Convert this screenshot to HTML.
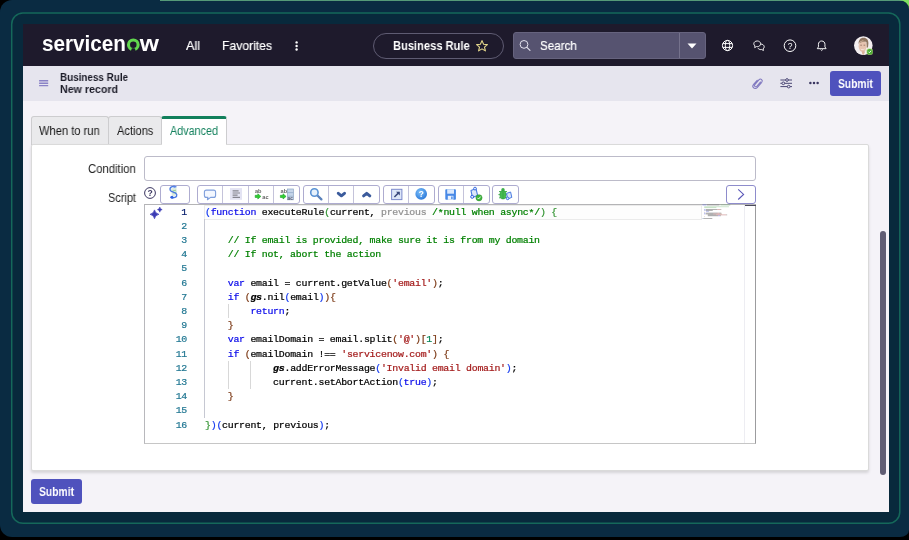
<!DOCTYPE html>
<html>
<head>
<meta charset="utf-8">
<title>Business Rule</title>
<style>
*{box-sizing:border-box;margin:0;padding:0}
html,body{width:909px;height:540px;overflow:hidden;background:#000}
body{font-family:"Liberation Sans",sans-serif;position:relative;color:#1a1a1a}
.abs{position:absolute}
.code,.t,svg{will-change:transform}
.t{position:absolute;white-space:nowrap;transform-origin:0 50%}
#frame{left:0;top:0;width:909px;height:537px;background:#0a2b42;border-radius:12px 9px 9px 12px / 12px 9px 7px 12px}
#topline{left:160px;top:0;width:749px;height:1.4px;background:#559a78}
#gline{left:11px;top:12px;width:889px;height:512px;border:1px solid #146a58;border-radius:11px}
#screen{left:23px;top:24px;width:866px;height:488px;background:#f5f3f8;overflow:hidden}
#nav{left:0;top:0;width:866px;height:42px;background:#1e1a2c}
#sub{left:0;top:42px;width:866px;height:35px;background:#e6e5ee}
.navtxt{color:#fff;font-size:13px;line-height:16px;top:14px;-webkit-text-stroke:0.2px}
.pill{left:350px;top:8.5px;width:131px;height:26px;border:1px solid #5e5b72;border-radius:13px}
.search{left:490px;top:8px;width:193px;height:27px;background:#565370;border-radius:3px;border:1px solid #66637e}
.btn{background:#4f52bd;color:#fff;font-weight:bold;font-size:12px;border-radius:3px}
.tab{top:92px;height:28.5px;background:#eaeaec;border:1px solid #cdcdcf;border-bottom:none;border-radius:3px 3px 0 0}
.tabt{font-size:12px;line-height:14px;top:100px;color:#161616}
#panel{left:8px;top:120px;width:838px;height:327px;background:#fff;border:1px solid #dadada;border-radius:2px;box-shadow:0 2px 3px rgba(0,0,0,.13)}
.lbl{font-size:12px;line-height:14px;color:#222}
#cond{left:121px;top:131.5px;width:612px;height:25.5px;border:1px solid #bcbbc9;border-radius:3px;background:#fff}
#editor{left:121px;top:180px;width:612px;height:240px;border:1px solid #c6c6c6;border-top-color:#b4b4b6;border-right-color:#9c9c9e;border-left-color:#b8b8bc;background:#fff;overflow:hidden}
.code{font-family:"Liberation Mono",monospace;font-size:9.9px;letter-spacing:-0.252px;line-height:14.2px;white-space:pre;color:#000;-webkit-text-stroke:0.22px}
.k{color:#0c0cea}.c{color:#008000}.s{color:#a41c1c}.n{color:#098658}
.b1{color:#1238f0}.b2{color:#319331}.b3{color:#7b3814}.g{color:#909090}
.gs{font-weight:bold;font-style:italic}
.tb{top:161px;height:19px;border:1px solid #aeacd0;border-radius:3px;background:#fff}
.dv{top:0;width:1px;height:17px;background:#c4c3da}
.ig{width:1px;background:#d8d8d8}
</style>
</head>
<body>
<div id="frame" class="abs"></div>
<div id="topline" class="abs"></div>
<svg class="abs" style="right:0;top:0" width="10" height="9"><path d="M0 0H10V9A10 9 0 0 0 0 0Z" fill="#7ee060"/></svg>
<svg class="abs" style="left:0;top:0" width="909" height="540"><rect x="11.7" y="12.9" width="888.1" height="510.4" rx="11.3" fill="#08293c" stroke="#15685a" stroke-width="1.5"/></svg>
<div id="screen" class="abs">
  <div id="nav" class="abs">
    <!-- LOGO -->
    <svg class="abs" style="left:16px;top:6px" width="126" height="28" viewBox="0 0 126 28">
      <text x="3" y="20.9" font-family="Liberation Sans" font-weight="bold" font-size="22.5" fill="#fff" textLength="84" lengthAdjust="spacingAndGlyphs">servicen</text>
      <circle cx="94.3" cy="14.85" r="4.8" fill="none" stroke="#62d84e" stroke-width="3.1"/>
      <path d="M91.6 21.8 L92.9 18.2 H95.7 L97 21.8Z" fill="#1e1a2c"/>
      <text x="100.8" y="20.9" font-family="Liberation Sans" font-weight="bold" font-size="22.5" fill="#fff" textLength="19.2" lengthAdjust="spacingAndGlyphs">w</text>
    </svg>
    <div class="t navtxt" id="t_all" style="transform:scaleX(0.969);left:163px">All</div>
    <div class="t navtxt" id="t_fav" style="transform:scaleX(0.935);left:199px">Favorites</div>
    <svg class="abs" style="left:270px;top:16px" width="8" height="12" viewBox="0 0 8 12"><circle cx="3.6" cy="2.4" r="1.2" fill="#fff"/><circle cx="3.6" cy="6" r="1.2" fill="#fff"/><circle cx="3.6" cy="9.5" r="1.2" fill="#fff"/></svg>
    <div class="abs pill"></div>
    <div class="t" id="t_pill" style="transform:scaleX(0.89);left:370px;top:13.5px;color:#fff;font-weight:bold;font-size:12.5px;line-height:16px">Business Rule</div>
    <svg class="abs" style="left:452px;top:15px" width="14" height="14" viewBox="0 0 14 14"><path d="M7 1.6 L8.6 5.2 L12.4 5.6 L9.5 8.1 L10.4 11.9 L7 9.9 L3.6 11.9 L4.5 8.1 L1.6 5.6 L5.4 5.2Z" fill="none" stroke="#e6d88c" stroke-width="1.1" stroke-linejoin="round"/></svg>
    <div class="abs search"></div>
    <svg class="abs" style="left:495px;top:14px" width="14" height="14" viewBox="0 0 14 14"><circle cx="6" cy="6.4" r="3.9" fill="none" stroke="#e4e2ee" stroke-width="1"/><path d="M8.9 9.3 L12 12.4" stroke="#e4e2ee" stroke-width="1.1" stroke-linecap="round"/></svg>
    <div class="t" id="t_search" style="transform:scaleX(0.891);left:517px;top:14px;-webkit-text-stroke:0.2px;color:#fff;font-size:13px;line-height:16px">Search</div>
    <div class="abs" style="left:656px;top:9px;width:1px;height:25px;background:#75728c"></div>
    <svg class="abs" style="left:664.3px;top:18.7px" width="10" height="6"><path d="M0.5 0.5H9.5L5 5.5Z" fill="#fff"/></svg>
    <!-- globe -->
    <svg class="abs" style="left:697px;top:14.4px" width="15" height="15" viewBox="0 0 15 15" fill="none" stroke="#fff" stroke-width="1"><circle cx="7.5" cy="7.5" r="5.1"/><ellipse cx="7.5" cy="7.5" rx="2.2" ry="5.1"/><path d="M2.8 5.6H12.2M2.8 9.4H12.2"/></svg>
    <!-- chat -->
    <svg class="abs" style="left:729.2px;top:14.9px" width="14.4" height="13.5" viewBox="0 0 16 15" fill="none" stroke="#fff" stroke-width="1" stroke-linejoin="round"><path d="M5.8 2.2C3.6 2.2 2 3.6 2 5.3C2 6.3 2.5 7.1 3.3 7.7L3 9.6L5 8.4C5.3 8.4 5.5 8.5 5.8 8.5C8 8.5 9.6 7.1 9.6 5.3C9.6 3.6 8 2.2 5.8 2.2Z"/><path d="M9.9 5.6C11.8 5.7 13.6 6.9 13.6 8.7C13.6 9.6 13.1 10.4 12.4 11L12.7 12.8L10.8 11.7C10.5 11.8 10.2 11.8 9.9 11.8C8.4 11.8 7 11.1 6.5 9.9" /></svg>
    <!-- help -->
    <svg class="abs" style="left:759px;top:14px" width="16" height="16" viewBox="0 0 16 16"><circle cx="8" cy="7.7" r="5.8" fill="none" stroke="#fff" stroke-width="1"/><text x="8" y="10.6" text-anchor="middle" font-family="Liberation Sans" font-size="8.5" fill="#fff">?</text></svg>
    <!-- bell -->
    <svg class="abs" style="left:792.3px;top:15px" width="13.4" height="14.6" preserveAspectRatio="none" viewBox="0 0 14 16" fill="none" stroke="#fff" stroke-width="1" stroke-linejoin="round"><path d="M7 2.2C4.9 2.2 3.6 3.8 3.6 5.8V8.6L2.4 10.6H11.6L10.4 8.6V5.8C10.4 3.8 9.1 2.2 7 2.2Z"/><path d="M5.8 11.4 L7 12.6 L8.2 11.4" /></svg>
    <!-- avatar -->
    <svg class="abs" style="left:830px;top:11px" width="22" height="22" viewBox="0 0 22 22">
      <defs><clipPath id="av"><circle cx="10.3" cy="10.6" r="9.3"/></clipPath></defs>
      <circle cx="10.3" cy="10.6" r="9.3" fill="#f3eef0"/>
      <g clip-path="url(#av)">
        <path d="M5.6 9 C5.4 4.6 8 2.6 10.6 2.8 C13.8 2.8 15.6 5 15.4 8.6 L15 12.4 L13.6 12.6 L13.4 7 C11.5 6 8.5 6.2 6.6 7.2Z" fill="#8f7661"/>
        <ellipse cx="9.6" cy="11.2" rx="4" ry="5.6" fill="#e6c3b0"/>
        <path d="M6.2 8.2 C7.5 6 11.8 5.6 13.4 7.4 C11.5 6.8 8.2 7 6.2 8.2Z" fill="#9b826c"/>
        <path d="M7.3 10.2H8.9M10.6 10.2H12.2" stroke="#8a6a5a" stroke-width="0.8"/>
        <path d="M7.6 13.4C8.8 14.8 11 14.8 12 13.2C11.4 15.4 8.4 15.6 7.6 13.4Z" fill="#fbf6f4"/>
        <path d="M8.6 16.2 L9.6 21 L12 21 L11.6 16Z" fill="#dcb29c"/>
        <path d="M1 22C2 18.6 5 17.6 8.4 17.2L10 20.4L12.4 17.2C15 17.4 18 18.4 19.6 22Z" fill="#f6f2f2"/>
      </g>
      <rect x="13.5" y="13.5" width="6.4" height="6.4" rx="1.8" fill="#a8e070" opacity="0.75"/>
      <circle cx="16.7" cy="16.7" r="2.6" fill="#4dae33"/>
      <path d="M15.4 16.7 L16.4 17.7 L18.1 15.8" fill="none" stroke="#fff" stroke-width="0.9"/>
    </svg>
  </div>
  <div id="sub" class="abs">
    <svg class="abs" style="left:16px;top:14px" width="10" height="7" viewBox="0 0 10 7"><path d="M0.1 0.8H9.2M0.1 3.2H9.2M0.1 5.6H9.2" stroke="#8a82c6" stroke-width="1.4"/></svg>
    <div class="t" id="t_h1" style="transform:scaleX(0.897);left:36.5px;top:5px;font-size:11px;font-weight:bold;line-height:13px;color:#1c1c28">Business Rule</div>
    <div class="t" id="t_h2" style="transform:scaleX(0.968);left:36.5px;top:17px;font-size:11px;font-weight:bold;line-height:13px;color:#1c1c28">New record</div>
    <!-- paperclip -->
    <svg class="abs" style="left:728px;top:10.5px" width="13" height="13.8" viewBox="0 0 16 17" fill="none" stroke="#8179c0" stroke-width="1.35" stroke-linecap="round"><path d="M11.6 6.2 L7.2 11.4 C6.5 12.2 5.4 12.2 4.8 11.6 C4.1 11 4.1 10 4.7 9.3 L9.7 3.5 C10.7 2.4 12.2 2.4 13.1 3.2 C14 4 14.1 5.4 13.2 6.5 L7.6 13 C6.3 14.5 4.4 14.6 3.2 13.5 C2 12.4 1.9 10.6 3.2 9.1 L7.6 4"/></svg>
    <!-- sliders -->
    <svg class="abs" style="left:756px;top:11px" width="15" height="12" viewBox="0 0 15 12" fill="none" stroke="#4a4674" stroke-width="1"><path d="M1.4 3H13M1.4 6.3H13M1.4 9.6H13"/><circle cx="8" cy="3" r="1.35" fill="#e6e5ee"/><circle cx="4.3" cy="6.3" r="1.35" fill="#e6e5ee"/><circle cx="9.7" cy="9.6" r="1.35" fill="#e6e5ee"/></svg>
    <!-- ellipsis -->
    <svg class="abs" style="left:785.3px;top:15px" width="12" height="4"><circle cx="2.35" cy="2" r="1.25" fill="#3a3660"/><circle cx="6" cy="2" r="1.25" fill="#3a3660"/><circle cx="9.65" cy="2" r="1.25" fill="#3a3660"/></svg>
    <div class="abs btn" style="left:807.3px;top:5.3px;width:51px;height:24.5px"></div>
    <div class="t" id="t_sub1" style="transform:scaleX(0.822);left:815px;top:9.5px;color:#fff;font-weight:bold;font-size:12.5px;line-height:16px">Submit</div>
  </div>
  <!-- tabs -->
  <div class="abs tab" style="left:8.4px;width:77.5px"></div>
  <div class="abs tab" style="left:85.4px;width:53.5px"></div>
  <div class="abs tab" style="left:138.3px;width:65.7px;background:#fff;border-top:3px solid #12805c;height:29px"></div>
  <div class="t tabt" id="t_tab1" style="transform:scaleX(0.928);left:16px">When to run</div>
  <div class="t tabt" id="t_tab2" style="transform:scaleX(0.925);left:93.9px">Actions</div>
  <div class="t tabt" id="t_tab3" style="transform:scaleX(0.899);left:147px;color:#12805c">Advanced</div>
  <div id="panel" class="abs"></div>
  <div class="abs" style="left:139.3px;top:119px;width:63.7px;height:3px;background:#fff"></div>
  <div class="t lbl" id="t_cond" style="transform:scaleX(0.943);left:64.9px;top:137.5px">Condition</div>
  <div id="cond" class="abs"></div>
  <div class="t lbl" id="t_script" style="transform:scaleX(0.912);left:84.7px;top:167px">Script</div>
  <!-- help icon -->
  <svg class="abs" style="left:120px;top:162px" width="14" height="14" viewBox="0 0 14 14"><circle cx="7" cy="7" r="5.4" fill="#fff" stroke="#3a3560" stroke-width="1"/><text x="7" y="10" text-anchor="middle" font-family="Liberation Sans" font-size="8.6" font-weight="bold" fill="#3a3560">?</text></svg>
  <!-- toolbar -->
  <div class="abs tb" style="left:137px;width:30px" id="tb1"></div>
  <div class="abs tb" style="left:174px;width:103px" id="tb2"><div class="abs dv" style="left:24px"></div><div class="abs dv" style="left:50px"></div><div class="abs dv" style="left:75px"></div></div>
  <div class="abs tb" style="left:280px;width:77px" id="tb3"><div class="abs dv" style="left:24px"></div><div class="abs dv" style="left:49px"></div></div>
  <div class="abs tb" style="left:360px;width:52px" id="tb4"><div class="abs dv" style="left:24px"></div></div>
  <div class="abs tb" style="left:415px;width:52px" id="tb5"><div class="abs dv" style="left:24px"></div></div>
  <div class="abs tb" style="left:469px;width:27px" id="tb6"></div>
  <div class="abs tb" style="left:703px;width:30px;border-color:#8e8ccc" id="tb7"></div>
  <svg class="abs" style="left:713px;top:164px" width="10" height="13" viewBox="0 0 10 13"><path d="M2.2 1.3 L7.6 6.4 L2.2 11.5" fill="none" stroke="#5a57b8" stroke-width="1.1"/></svg>
<!-- toolbar icons (absolute coords) -->
  <svg class="abs" style="left:0;top:0" width="866" height="488" viewBox="23 24 866 488" font-family="Liberation Sans">
    <defs><radialGradient id="bs" cx="0.4" cy="0.35" r="0.75"><stop offset="0" stop-color="#7cc0fa"/><stop offset="1" stop-color="#2472d6"/></radialGradient></defs>
    <!-- 1 script scroll -->
    <g>
      <path d="M171 188.4 L176.4 187.4 L177.2 195 L172 196.4Z" fill="#dcebe0"/>
      <path d="M172.4 191 L176 190.2 M172.8 193 L176.2 192.2" stroke="#8fcf8f" stroke-width="0.9"/>
      <path d="M176 186.8 C172.6 185.4 169.2 187.4 170.2 190.2 C171 192.4 176.2 192 176.8 194.6 C177.3 197 173.6 198.6 170.8 197.2" fill="none" stroke="#4a7be2" stroke-width="1.3" stroke-linecap="round"/>
      <circle cx="174.2" cy="186.6" r="1.2" fill="#5a86e6"/>
      <circle cx="172" cy="197.2" r="1.5" fill="#2f62e0"/>
    </g>
    <!-- 2 comment bubble -->
    <path d="M206.4 190.1 H213.6 A2 2 0 0 1 215.6 192.1 V195.4 A2 2 0 0 1 213.6 197.4 H210.6 L207.4 199.7 L207.9 197.4 H206.4 A2 2 0 0 1 204.4 195.4 V192.1 A2 2 0 0 1 206.4 190.1Z" fill="#f3f7ff" stroke="#7f9fdc" stroke-width="1.1" stroke-linejoin="round"/>
    <!-- 3 format lines -->
    <rect x="230" y="188.1" width="12" height="11.7" fill="#e3e3f3"/>
    <path d="M232.6 190.8H238.6M232.6 193H240M232.6 195.2H237.6M232.6 197.4H240" stroke="#858590" stroke-width="1.2"/>
    <!-- 4 replace -->
    <text x="255" y="193.2" font-size="5.6" fill="#666" font-weight="bold">ab</text>
    <path d="M255.2 195.3H257.8V193.8L260.9 196.4L257.8 199V197.5H255.2Z" fill="#2fd02f" stroke="#1f9f2a" stroke-width="0.6" stroke-linejoin="round"/>
    <text x="262.3" y="199" font-size="5.6" fill="#666" font-weight="bold">ac</text>
    <!-- 5 replace all -->
    <text x="280.6" y="193.2" font-size="5.6" fill="#666" font-weight="bold">ab</text>
    <path d="M280.4 195.3H283V193.8L286.1 196.4L283 199V197.5H280.4Z" fill="#2fd02f" stroke="#1f9f2a" stroke-width="0.6" stroke-linejoin="round"/>
    <rect x="287.4" y="189" width="6" height="10.8" fill="#c6d6ea" stroke="#8ea6c6" stroke-width="0.7"/>
    <path d="M287.4 192.6H293.4M287.4 196.2H293.4" stroke="#8ea6c6" stroke-width="0.7"/>
    <text x="287.6" y="199.6" font-size="4.6" fill="#556" font-weight="bold">ac</text>
    <!-- 6 search -->
    <path d="M317.2 195.3 L321.4 199.4" stroke="#5a82bc" stroke-width="2.3" stroke-linecap="round"/>
    <circle cx="314.4" cy="192.5" r="3.7" fill="#e6f1fc" stroke="#5a92d4" stroke-width="1.6"/>
    <!-- 7 8 chevrons -->
    <path d="M338.3 193.3 L341.4 195.8 L344.5 193.3" fill="none" stroke="#3b5b9c" stroke-width="3" stroke-linecap="round" stroke-linejoin="round"/>
    <path d="M363.6 195.8 L366.7 193.3 L369.8 195.8" fill="none" stroke="#3b5b9c" stroke-width="3" stroke-linecap="round" stroke-linejoin="round"/>
    <!-- 9 popout -->
    <rect x="391.6" y="189.3" width="10.3" height="10.3" fill="#dde6f8" stroke="#7c8acc" stroke-width="1"/>
    <path d="M394.4 197 L399 192.4" stroke="#39487c" stroke-width="1.5"/>
    <path d="M396 191.7 H399.8 V195.5Z" fill="#39487c"/>
    <!-- 10 help sphere -->
    <circle cx="421.2" cy="193.9" r="5.8" fill="url(#bs)"/>
    <text x="421.2" y="196.9" font-size="8.4" font-weight="bold" fill="#fff" text-anchor="middle">?</text>
    <!-- 11 save -->
    <rect x="445.3" y="189.3" width="10.6" height="10.5" rx="0.8" fill="#4788e6"/>
    <rect x="447.2" y="189.3" width="6.8" height="4.4" fill="#dbe9fd"/>
    <rect x="447.8" y="195.8" width="5.6" height="4" fill="#eaf2fd"/>
    <rect x="451.2" y="196.5" width="1.4" height="2.6" fill="#4788e6"/>
    <!-- 12 scroll + check -->
    <path d="M471 190.6 L476 188.6 L477.6 195.4 L472.4 197.4Z" fill="#dce8fa" stroke="#4a7be2" stroke-width="1.1" stroke-linejoin="round"/>
    <circle cx="475" cy="188.6" r="1.4" fill="#e8f0ff" stroke="#3f6fe0" stroke-width="1"/>
    <circle cx="472.2" cy="196.8" r="1.5" fill="#e8f0ff" stroke="#2f5fe0" stroke-width="1"/>
    <circle cx="479" cy="197.8" r="3.1" fill="#3cb43c" stroke="#2a8a2a" stroke-width="0.5"/>
    <path d="M477.4 197.8 L478.6 199 L480.6 196.6" fill="none" stroke="#fff" stroke-width="0.9"/>
    <!-- 13 bug -->
    <path d="M499 191.5 L507 191.5 M498.4 194.6 L507.6 194.6 M499 197.8 L507 197.8" stroke="#3cae4a" stroke-width="0.9"/>
    <circle cx="503" cy="189.8" r="1.7" fill="#3cae4a"/>
    <ellipse cx="503" cy="194.8" rx="3.1" ry="4.2" fill="#46bd52" stroke="#2f9a3c" stroke-width="0.6"/>
    <path d="M503 191 V199" stroke="#2f9a3c" stroke-width="0.6"/>
    <path d="M506.6 193.4 L510.6 192 L511.8 197.4 L507.6 199Z" fill="#dce8fa" stroke="#4a7be2" stroke-width="1" stroke-linejoin="round"/>
    <circle cx="507.6" cy="198.4" r="1.3" fill="#e8f0ff" stroke="#2f5fe0" stroke-width="0.9"/>
  </svg>
  <div id="editor" class="abs"></div>
  <!-- current line highlight -->
  <div class="abs" style="left:181px;top:181px;width:498px;height:14.5px;border:1px solid #ebebeb;background:#fdfdfd"></div>
  <!-- indent guides -->
  <div class="abs ig" style="left:181px;top:195px;height:198.5px;background:#c6c8d2"></div>
  <div class="abs ig" style="left:204.5px;top:280px;height:14.2px"></div>
  <div class="abs ig" style="left:204.5px;top:336.8px;height:28.4px"></div>
  <div class="abs ig" style="left:227.2px;top:336.8px;height:28.4px"></div>
  <!-- sparkle -->
  <svg class="abs" style="left:125px;top:180px" width="18" height="18" viewBox="0 0 18 18"><path d="M6.5 5.9 Q7.1 9.4 10.9 10.3 Q7.1 11.2 6.5 14.7 Q5.9 11.2 2.1 10.3 Q5.9 9.4 6.5 5.9Z" fill="#3b3bb4" stroke="#3b3bb4" stroke-width="0.7" stroke-linejoin="round"/><path d="M11.8 3 Q12.1 5.1 14.2 5.6 Q12.1 6.1 11.8 8.2 Q11.5 6.1 9.4 5.6 Q11.5 5.1 11.8 3Z" fill="#3b3bb4" stroke="#3b3bb4" stroke-width="0.5" stroke-linejoin="round"/></svg>
  <div class="abs code" id="lnums" style="left:133.6px;top:181px;padding-top:0.5px;width:30px;text-align:right;color:#237893"><span style="color:#0b216f">1</span>
2
3
4
5
6
7
8
9
10
11
12
13
14
15
16</div>
  <div class="abs code" id="code" style="left:181.7px;top:181px;padding-top:0.5px"><span class="b1">(</span><span class="k">function</span> executeRule<span class="b2">(</span>current, <span class="g">previous</span> <span class="c">/<span style="position:relative;top:1.7px">*</span>null when async<span style="position:relative;top:1.7px">*</span>/</span><span class="b2">)</span> <span class="b2">{</span>

    <span class="c">// If email is provided, make sure it is from my domain</span>
    <span class="c">// If not, abort the action</span>

    <span class="k">var</span> email = current.getValue<span class="b3">(</span><span class="s">'email'</span><span class="b3">)</span>;
    <span class="k">if</span> <span class="b3">(</span><span class="gs">gs</span>.nil<span class="b1">(</span>email<span class="b1">)</span><span class="b3">)</span><span class="b3">{</span>
        <span class="k">return</span>;
    <span class="b3">}</span>
    <span class="k">var</span> emailDomain = email.split<span class="b3">(</span><span class="s">'@'</span><span class="b3">)</span><span class="b3">[</span><span class="n">1</span><span class="b3">]</span>;
    <span class="k">if</span> <span class="b3">(</span>emailDomain !== <span class="s">'servicenow.com'</span><span class="b3">)</span> <span class="b3">{</span>
            <span class="gs">gs</span>.addErrorMessage<span class="b1">(</span><span class="s">'Invalid email domain'</span><span class="b1">)</span>;
            current.setAbortAction<span class="b1">(</span><span class="k">true</span><span class="b1">)</span>;
    <span class="b3">}</span>

<span class="b2">}</span><span class="b1">)</span><span class="b1">(</span>current, previous<span class="b1">)</span>;</div>
  <!-- minimap -->
  <svg class="abs" id="minimap" style="left:679px;top:180px" width="32" height="18" viewBox="0 0 32 18"><rect x="0.40" y="0.55" width="4.05" height="0.85" fill="#2030d0" opacity="0.44"/><rect x="4.90" y="0.55" width="12.60" height="0.85" fill="#303030" opacity="0.44"/><rect x="18.40" y="0.55" width="8.55" height="0.85" fill="#309030" opacity="0.36"/><rect x="26.95" y="0.55" width="1.35" height="0.85" fill="#309030" opacity="0.36"/><rect x="2.20" y="2.35" width="24.75" height="0.85" fill="#309030" opacity="0.28"/><rect x="2.20" y="3.25" width="12.15" height="0.85" fill="#309030" opacity="0.28"/><rect x="2.20" y="5.05" width="1.35" height="0.85" fill="#2030d0" opacity="0.40"/><rect x="4.00" y="5.05" width="11.25" height="0.85" fill="#303030" opacity="0.44"/><rect x="15.25" y="5.05" width="3.15" height="0.85" fill="#a03030" opacity="0.40"/><rect x="18.40" y="5.05" width="0.90" height="0.85" fill="#303030" opacity="0.40"/><rect x="2.20" y="5.95" width="0.90" height="0.85" fill="#2030d0" opacity="0.40"/><rect x="3.55" y="5.95" width="7.20" height="0.85" fill="#303030" opacity="0.44"/><rect x="4.00" y="6.85" width="2.70" height="0.85" fill="#2030d0" opacity="0.40"/><rect x="6.70" y="6.85" width="0.45" height="0.85" fill="#303030" opacity="0.40"/><rect x="2.20" y="7.75" width="0.45" height="0.85" fill="#7b3814" opacity="0.40"/><rect x="2.20" y="8.65" width="1.35" height="0.85" fill="#2030d0" opacity="0.40"/><rect x="4.00" y="8.65" width="11.70" height="0.85" fill="#303030" opacity="0.44"/><rect x="15.70" y="8.65" width="1.35" height="0.85" fill="#a03030" opacity="0.40"/><rect x="17.05" y="8.65" width="2.25" height="0.85" fill="#303030" opacity="0.40"/><rect x="2.20" y="9.55" width="0.90" height="0.85" fill="#2030d0" opacity="0.40"/><rect x="3.55" y="9.55" width="7.65" height="0.85" fill="#303030" opacity="0.44"/><rect x="11.20" y="9.55" width="7.20" height="0.85" fill="#a03030" opacity="0.40"/><rect x="18.40" y="9.55" width="1.35" height="0.85" fill="#7b3814" opacity="0.40"/><rect x="5.80" y="10.45" width="8.55" height="0.85" fill="#303030" opacity="0.44"/><rect x="14.35" y="10.45" width="9.90" height="0.85" fill="#a03030" opacity="0.40"/><rect x="24.25" y="10.45" width="0.90" height="0.85" fill="#303030" opacity="0.40"/><rect x="5.80" y="11.35" width="10.35" height="0.85" fill="#303030" opacity="0.44"/><rect x="16.15" y="11.35" width="1.80" height="0.85" fill="#2030d0" opacity="0.40"/><rect x="17.95" y="11.35" width="0.90" height="0.85" fill="#303030" opacity="0.40"/><rect x="2.20" y="12.25" width="0.45" height="0.85" fill="#7b3814" opacity="0.40"/><rect x="0.40" y="14.05" width="1.35" height="0.85" fill="#305090" opacity="0.40"/><rect x="1.75" y="14.05" width="8.55" height="0.85" fill="#303030" opacity="0.44"/></svg>
  <div class="abs" style="left:721px;top:181px;width:1px;height:238px;background:#ededf2"></div>
  <div class="abs" style="left:721.5px;top:180.5px;width:11px;height:1.6px;background:#4c4a5c"></div>
  <div class="abs btn" style="left:8px;top:455px;width:50.5px;height:25px"></div>
  <div class="t" id="t_sub2" style="transform:scaleX(0.826);left:15.5px;top:459.5px;color:#fff;font-weight:bold;font-size:12.5px;line-height:16px">Submit</div>
  <!-- page scrollbar -->
  <div class="abs" style="left:856.5px;top:207px;width:6.5px;height:244px;background:#605d74;border-radius:3.5px"></div>
</div>
</body>
</html>
